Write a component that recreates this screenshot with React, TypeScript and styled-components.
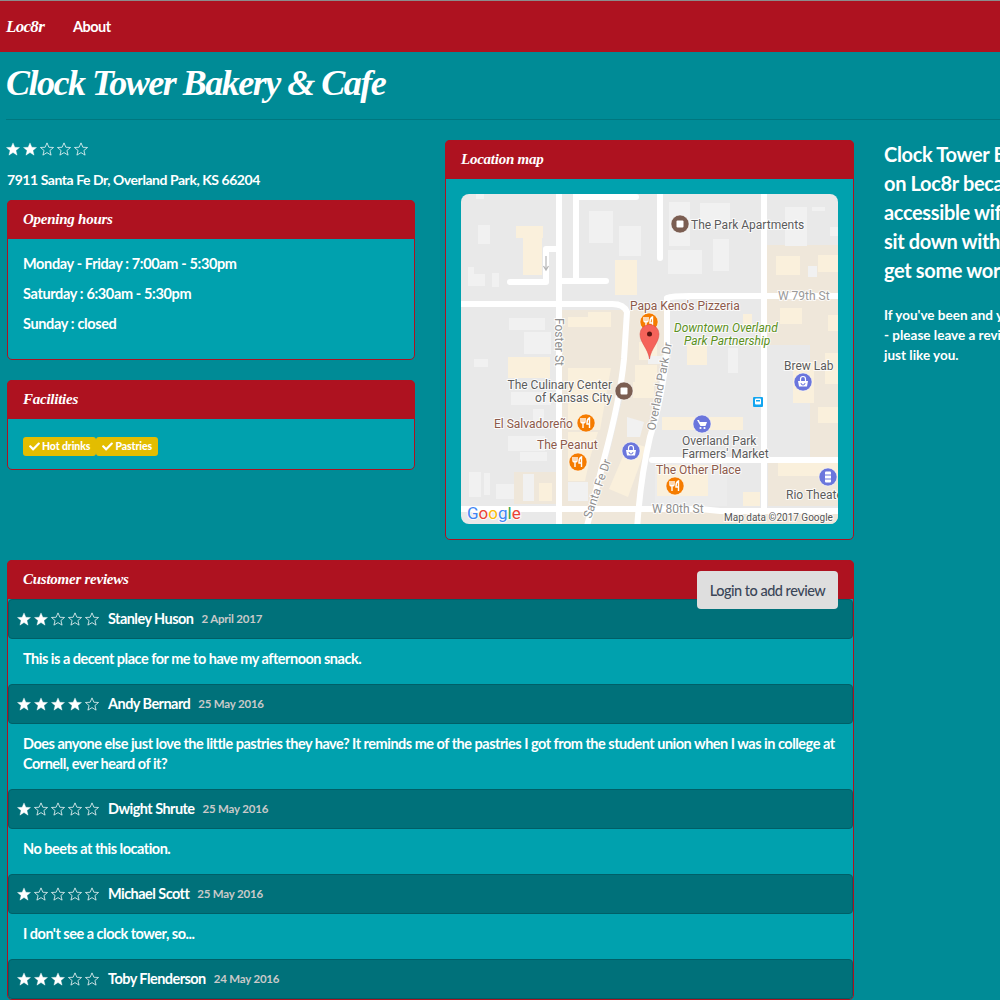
import React from "react";
import styled, { createGlobalStyle } from "styled-components";
import { FaCheck } from "react-icons/fa";

const colors = {
  page: "#008b96",
  panel: "#00a1ae",
  red: "#ae1220",
  dark: "#00717a",
  yellow: "#e3bd00",
};

const scriptFont = `"Liberation Serif", "DejaVu Serif", serif`;

const GlobalStyle = createGlobalStyle`
  html, body {
    margin: 0;
    height: 1000px;
    overflow: hidden;
    background: ${colors.page};
  }
  body {
    font-family: Lato, "Open Sans", sans-serif;
    font-size: 14.5px;
    font-weight: 700;
    line-height: 20px;
    letter-spacing: -0.45px;
    color: #fff;
  }
`;

const Navbar = styled.nav`
  display: flex;
  align-items: center;
  height: 51px;
  border-top: 1px solid #8c8c8c;
  background: ${colors.red};
`;

const Brand = styled.a`
  width: 67px;
  padding-left: 6px;
  font-family: ${scriptFont};
  font-size: 17px;
  font-style: italic;
  font-weight: 700;
  letter-spacing: -0.7px;
`;

const NavLink = styled.a`
  font-size: 14.5px;
  letter-spacing: -0.5px;
`;

const Page = styled.div`
  width: 1340px;
  padding: 0 7px;
  box-sizing: border-box;
`;

const Title = styled.h1`
  margin: 0 0 0 -1px;
  padding: 9px 0 15px;
  height: 68px;
  box-sizing: border-box;
  border-bottom: 1px solid #00777f;
  font-family: ${scriptFont};
  font-size: 36px;
  line-height: 44px;
  font-style: italic;
  font-weight: 700;
  letter-spacing: -1.5px;
  white-space: nowrap;
`;

const Content = styled.div`
  display: flex;
  gap: 30px;
  padding-top: 20px;
`;

const MainColumn = styled.div`
  display: grid;
  grid-template-columns: 408px 409px;
  column-gap: 30px;
  align-content: start;
  width: 847px;
  flex: none;
`;

const DetailColumn = styled.div`
  min-width: 0;
`;

const Rating = styled.div`
  display: flex;
  gap: 3px;
  flex: none;
`;

const RatingRow = styled.div`
  height: 18px;
  padding-top: 2px;
  margin: 0 0 10px -1px;
`;

const Address = styled.p`
  margin: 0 0 10px;
  font-size: 14px;
`;

const Panel = styled.section<{ $wide?: boolean }>`
  position: relative;
  grid-column: ${(props) => (props.$wide ? "1 / 3" : "auto")};
  margin-bottom: 20px;
  border: 1px solid ${colors.red};
  border-radius: 5px;
  background: ${colors.panel};
`;

const PanelHeading = styled.h3`
  margin: -1px -1px 0;
  height: 39px;
  padding: 0 16px 1px;
  box-sizing: border-box;
  display: flex;
  align-items: center;
  border-radius: 5px 5px 0 0;
  background: ${colors.red};
  font-family: ${scriptFont};
  font-size: 15px;
  font-style: italic;
  font-weight: 700;
  letter-spacing: -0.25px;
`;

const PanelBody = styled.div`
  padding: 15px;
`;

const Hours = styled.p`
  margin: 0 0 10px;
  letter-spacing: -0.36px;
`;

const FacilityBody = styled.div`
  display: flex;
  padding: 18px 15px 13px;
`;

const Facility = styled.span`
  display: flex;
  align-items: center;
  gap: 2px;
  height: 19px;
  padding: 0 6px;
  border-radius: 3px;
  background: ${colors.yellow};
  font-size: 10.5px;
  font-weight: 900;
  letter-spacing: -0.1px;
  line-height: 1;
`;

const MapFrame = styled.svg`
  display: block;
  width: 377px;
  height: 330px;
  border-radius: 8px;
`;

const MapLabel = styled.text<{ $color?: string; $size?: number; $italic?: boolean }>`
  font-family: Roboto, sans-serif;
  font-size: ${(props) => props.$size || 12}px;
  font-style: ${(props) => (props.$italic ? "italic" : "normal")};
  font-weight: 400;
  letter-spacing: 0;
  fill: ${(props) => props.$color || "#5c5c5c"};
  stroke: rgba(255, 255, 255, 0.8);
  stroke-width: 2px;
  paint-order: stroke;
`;

const LoginButton = styled.button`
  position: absolute;
  top: 10px;
  right: 15px;
  width: 141px;
  height: 38px;
  border: 0;
  border-radius: 4px;
  background: #dedede;
  color: #3b4658;
  font-family: Lato, sans-serif;
  font-size: 14.5px;
  font-weight: 500;
  letter-spacing: -0.5px;
  z-index: 2;
`;

const ReviewHeading = styled.div`
  display: flex;
  align-items: center;
  height: 40px;
  padding: 0 8px;
  box-sizing: border-box;
  border: 1px solid #005f67;
  border-radius: 4px;
  background: ${colors.dark};
`;

const ReviewAuthor = styled.span`
  margin-left: 9px;
  letter-spacing: -0.55px;
`;

const ReviewDate = styled.small`
  margin-left: 8px;
  font-size: 11.5px;
  letter-spacing: -0.2px;
  color: #c9c9c9;
`;

const ReviewText = styled.p`
  margin: 0;
  padding: 10px 15px 15px;
  letter-spacing: -0.5px;
`;

const Sidebar = styled.aside`
  width: 380px;
  flex: none;
`;

const Lead = styled.p`
  margin: 0 0 20px;
  font-size: 20px;
  font-weight: 700;
  letter-spacing: -0.35px;
  line-height: 29px;
`;

const Note = styled.p`
  margin: 1px 0 0;
  font-size: 13.5px;
  letter-spacing: 0;
`;

const Star = ({ filled, size }: { filled: boolean; size: number }) => (
  <svg width={size} height={size} viewBox="0 0 24 24">
    <polygon
      points="12,1.5 15.2,9 23.2,9.4 17,14.6 19,22.5 12,18.2 5,22.5 7,14.6 0.8,9.4 8.8,9"
      fill={filled ? "#fff" : "none"}
      stroke="#fff"
      strokeWidth={filled ? 0.6 : 1.3}
    />
  </svg>
);

const Stars = ({ count, size = 14 }: { count: number; size?: number }) => (
  <Rating>
    {[1, 2, 3, 4, 5].map((n) => (
      <Star key={n} filled={n <= count} size={size} />
    ))}
  </Rating>
);

const tan = "#efe7da";
const building = "#faf0dc";
const grey = "#f1f1f1";

const greyBlocks = [
  [478, 225, 12, 19], [492, 273, 7, 14], [476, 194, 8, 5], [509, 318, 36, 12], [524, 332, 27, 22],
  [589, 211, 24, 32], [619, 226, 22, 30], [669, 202, 21, 44], [700, 203, 30, 23], [713, 239, 16, 32],
  [668, 250, 34, 24], [785, 207, 22, 39], [808, 266, 9, 11], [812, 207, 13, 4], [830, 227, 8, 9],
  [728, 348, 10, 25], [511, 392, 40, 13], [533, 409, 11, 12], [508, 436, 37, 15], [520, 452, 27, 9],
  [469, 472, 12, 25], [484, 473, 6, 22], [496, 484, 18, 15], [523, 474, 11, 27], [474, 359, 14, 8],
  [568, 482, 20, 19], [648, 356, 14, 8],
];

const tanBlocks = [
  [516, 226, 27, 12], [523, 238, 19, 37], [615, 260, 22, 35], [568, 317, 43, 10], [588, 312, 23, 5],
  [776, 256, 24, 19], [818, 255, 20, 17], [780, 308, 22, 16], [828, 315, 10, 16], [687, 344, 20, 21],
  [743, 314, 9, 13], [508, 357, 42, 21], [639, 342, 18, 18], [635, 365, 22, 17], [633, 382, 21, 16],
  [662, 417, 81, 13], [793, 362, 21, 41], [825, 353, 13, 31], [818, 407, 20, 16], [778, 461, 60, 15],
  [657, 465, 51, 31], [743, 492, 17, 14], [539, 483, 13, 18],
];

const PoiCircle = ({ x, y, color }: { x: number; y: number; color: string }) => (
  <circle cx={x} cy={y} r={9} fill={color} stroke="#fff" strokeOpacity={0.5} strokeWidth={1} />
);

const FoodPoi = ({ x, y }: { x: number; y: number }) => (
  <g>
    <PoiCircle x={x} y={y} color="#f57c00" />
    <path
      d={`M${x - 5} ${y - 5}v3.500q0 1.500 2 1.500q2 0 2 -1.500v-3.500M${x - 3} ${y - 5}v10M${x + 3.500} ${y + 5}v-10q-2.500 1 -2.500 5v1h2.500`}
      fill="none"
      stroke="#fff"
      strokeWidth={1.4}
    />
  </g>
);

const BrownPoi = ({ x, y }: { x: number; y: number }) => (
  <g>
    <PoiCircle x={x} y={y} color="#7b5e52" />
    <rect x={x - 3.5} y={y - 3.5} width={7} height={7} rx={1} fill="#fff" />
  </g>
);

const ShopPoi = ({ x, y }: { x: number; y: number }) => (
  <g>
    <PoiCircle x={x} y={y} color="#6b76dc" />
    <path d={`M${x - 5} ${y - 1}h10l-1 5.500h-8z`} fill="#fff" />
    <path d={`M${x - 2.500} ${y - 1}v-2a2.500 2.500 0 0 1 5 0v2`} fill="none" stroke="#fff" strokeWidth={1.2} />
    <path d={`M${x - 2} ${y + 1}a2 2 0 0 0 4 0`} fill="none" stroke="#6b76dc" strokeWidth={1} />
  </g>
);

const CartPoi = ({ x, y }: { x: number; y: number }) => (
  <g>
    <PoiCircle x={x} y={y} color="#6b76dc" />
    <path d={`M${x - 5} ${y - 4}h2l.8 2h7.200l-1.500 4h-5z`} fill="#fff" />
    <circle cx={x - 1.5} cy={y + 4} r={1.1} fill="#fff" />
    <circle cx={x + 2.5} cy={y + 4} r={1.1} fill="#fff" />
  </g>
);

const LocationMap = () => (
  <MapFrame viewBox="461 194 377 330">
    <rect x={461} y={194} width={377} height={330} fill="#e9e9e9" />

    {/* land use */}
    <polygon points="562,310 624,310 620,400 604,459 590,506 562,506" fill={tan} />
    <polygon points="630,310 664,310 664,350 650,437 637,506 592,506 608,459 622,400" fill={tan} />
    <rect x={767} y={245} width={71} height={100} fill={tan} />
    <rect x={810} y={345} width={28} height={112} fill={tan} />
    <rect x={768} y={462} width={70} height={44} fill={tan} />
    <rect x={514} y={472} width={42} height={32} fill={tan} />
    <rect x={655} y={462} width={72} height={44} fill="#ececec" />
    <rect x={562} y={512} width={276} height={12} fill={tan} />
    <polygon points="568,368 611,368 600,430 568,430" fill={building} />
    <polygon points="568,432 598,432 590,458 585,481 568,481" fill={building} />
    <polygon points="609,489 629,442 646,447 628,497" fill={building} />

    {tanBlocks.map(([x, y, w, h]) => (
      <rect key={`${x}-${y}`} x={x} y={y} width={w} height={h} fill={building} />
    ))}
    {greyBlocks.map(([x, y, w, h]) => (
      <rect key={`${x}-${y}`} x={x} y={y} width={w} height={h} fill={grey} />
    ))}
    <polygon points="468,267 474,267 474,274 485,274 485,286 468,286" fill={grey} />
    <polygon points="627,417 644,422 640,437 627,437" fill={grey} />

    {/* roads */}
    <g fill="none" stroke="#fff" strokeWidth={6} strokeLinecap="round">
      <path d="M559 190V530" strokeLinecap="butt" />
      <path d="M576 280V197H636" />
      <path d="M562 281H606" />
      <path d="M556 249H546V282H510" strokeLinejoin="round" />
      <path d="M660 190V258" />
      <path d="M455 304H612Q624 304 627 312L624 359Q620 400 604 459L586 530" strokeLinecap="butt" />
      <path d="M667 298V350Q662 400 650 437Q640 480 637 530" strokeLinecap="butt" />
      <path d="M667 298Q672 296 690 296H845" />
      <path d="M764 190V510" strokeLinecap="butt" />
      <path d="M652 460H845" />
      <path d="M455 509H700L720 511H845" />
    </g>

    <path d="M546 256v14m-2.500-4l2.500 4 2.500-4" fill="none" stroke="#b5b5b5" strokeWidth={1.2} />
    <rect x={753} y={397} width={10} height={10} rx={1} fill="#12a5f0" />
    <rect x={755} y={398.500} width={6} height={6} rx={1} fill="#fff" />
    <rect x={756} y={400} width={4} height={1.500} fill="#12a5f0" />

    <BrownPoi x={680} y={224} />
    <BrownPoi x={624} y={391} />
    <FoodPoi x={649} y={322} />
    <FoodPoi x={586} y={423} />
    <FoodPoi x={578} y={462} />
    <FoodPoi x={675} y={486} />
    <ShopPoi x={631} y={451} />
    <ShopPoi x={803} y={382} />
    <CartPoi x={702} y={424} />
    <PoiCircle x={828} y={477} color="#6b76dc" />
    <rect x={825} y={471.500} width={6} height={11} rx={1} fill="#fff" />
    <path d="M825 475H831M825 479H831" stroke="#6b76dc" strokeWidth={1} />

    <path d="M649.500 359C648 348 640 343 640 334a9.500 9.500 0 0 1 19 0C659 343 651 348 649.500 359Z" fill="#f5635a" stroke="#d9443c" strokeWidth={0.5} />
    <circle cx={649.500} cy={334} r={2.500} fill="#5a1612" />

    <MapLabel x={691} y={229}>The Park Apartments</MapLabel>
    <MapLabel x={778} y={300} $color="#9a9a9a">W 79th St</MapLabel>
    <MapLabel x={630} y={310} $color="#8d5a4b">Papa Keno's Pizzeria</MapLabel>
    <MapLabel x={674} y={332} $color="#5b9020" $italic>Downtown Overland</MapLabel>
    <MapLabel x={684} y={345} $color="#5b9020" $italic>Park Partnership</MapLabel>
    <MapLabel transform="translate(555 318) rotate(90)" $color="#8f8f8f">Foster St</MapLabel>
    <MapLabel transform="translate(655 431) rotate(-79)" $color="#8f8f8f">Overland Park Dr</MapLabel>
    <MapLabel x={612} y={389} textAnchor="end">The Culinary Center</MapLabel>
    <MapLabel x={612} y={402} textAnchor="end">of Kansas City</MapLabel>
    <MapLabel x={494} y={428} $color="#8d5a4b">El Salvadoreño</MapLabel>
    <MapLabel x={537} y={449} $color="#8d5a4b">The Peanut</MapLabel>
    <MapLabel transform="translate(591 519) rotate(-71)" $color="#8f8f8f">Santa Fe Dr</MapLabel>
    <MapLabel x={682} y={445}>Overland Park</MapLabel>
    <MapLabel x={682} y={458}>Farmers' Market</MapLabel>
    <MapLabel x={656} y={474} $color="#8d5a4b">The Other Place</MapLabel>
    <MapLabel x={784} y={370}>Brew Lab</MapLabel>
    <MapLabel x={786} y={499}>Rio Theater</MapLabel>
    <MapLabel x={652} y={513} $color="#8f8f8f">W 80th St</MapLabel>
    <MapLabel x={724} y={521} $size={10} $color="#555">Map data ©2017 Google</MapLabel>
    <MapLabel x={467} y={519} $size={17}>
      <tspan fill="#4285f4">G</tspan>
      <tspan fill="#ea4335">o</tspan>
      <tspan fill="#fbbc05">o</tspan>
      <tspan fill="#4285f4">g</tspan>
      <tspan fill="#34a853">l</tspan>
      <tspan fill="#ea4335">e</tspan>
    </MapLabel>
  </MapFrame>
);

const reviews = [
  { stars: 2, author: "Stanley Huson", date: "2 April 2017", text: "This is a decent place for me to have my afternoon snack." },
  {
    stars: 4,
    author: "Andy Bernard",
    date: "25 May 2016",
    text: "Does anyone else just love the little pastries they have? It reminds me of the pastries I got from the student union when I was in college at Cornell, ever heard of it?",
  },
  { stars: 1, author: "Dwight Shrute", date: "25 May 2016", text: "No beets at this location." },
  { stars: 1, author: "Michael Scott", date: "25 May 2016", text: "I don't see a clock tower, so..." },
  { stars: 3, author: "Toby Flenderson", date: "24 May 2016", text: "" },
];

export default function App() {
  return (
    <>
      <GlobalStyle />
      <Navbar>
        <Brand>Loc8r</Brand>
        <NavLink>About</NavLink>
      </Navbar>
      <Page>
        <Title>Clock Tower Bakery &amp; Cafe</Title>
        <Content>
          <MainColumn>
            <DetailColumn>
              <RatingRow>
                <Stars count={2} />
              </RatingRow>
              <Address>7911 Santa Fe Dr, Overland Park, KS 66204</Address>
              <Panel>
                <PanelHeading>Opening hours</PanelHeading>
                <PanelBody>
                  <Hours>Monday - Friday : 7:00am - 5:30pm</Hours>
                  <Hours>Saturday : 6:30am - 5:30pm</Hours>
                  <Hours>Sunday : closed</Hours>
                </PanelBody>
              </Panel>
              <Panel>
                <PanelHeading>Facilities</PanelHeading>
                <FacilityBody>
                  <Facility>
                    <FaCheck size={11} />
                    Hot drinks
                  </Facility>
                  <Facility>
                    <FaCheck size={11} />
                    Pastries
                  </Facility>
                </FacilityBody>
              </Panel>
            </DetailColumn>
            <Panel>
              <PanelHeading>Location map</PanelHeading>
              <PanelBody>
                <LocationMap />
              </PanelBody>
            </Panel>
            <Panel $wide>
              <PanelHeading>Customer reviews</PanelHeading>
              <LoginButton>Login to add review</LoginButton>
              {reviews.map((review) => (
                <div key={review.author}>
                  <ReviewHeading>
                    <Stars count={review.stars} />
                    <ReviewAuthor>{review.author}</ReviewAuthor>
                    <ReviewDate>{review.date}</ReviewDate>
                  </ReviewHeading>
                  {review.text && <ReviewText>{review.text}</ReviewText>}
                </div>
              ))}
            </Panel>
          </MainColumn>
          <Sidebar>
            <Lead>
              Clock Tower Bakery &amp; Cafe is
              <br />
              on Loc8r because it has
              <br />
              accessible wifi and space to
              <br />
              sit down with your laptop and
              <br />
              get some work done.
            </Lead>
            <Note>
              If you've been and you like it - or if you don't
              <br />- please leave a review to help other people
              <br />
              just like you.
            </Note>
          </Sidebar>
        </Content>
      </Page>
    </>
  );
}
